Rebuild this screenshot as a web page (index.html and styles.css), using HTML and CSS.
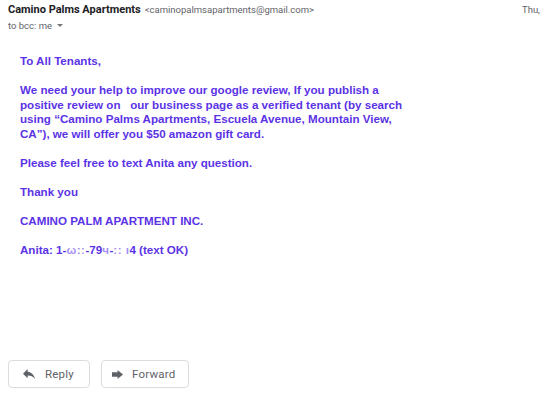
FILE: index.html
```html
<!DOCTYPE html>
<html>
<head>
<meta charset="utf-8">
<link rel="stylesheet" href="styles.css">
</head>
<body>
<div class="mail">
  <div class="header">
    <div class="from-row">
      <span class="sender">Camino Palms Apartments</span>
      <span class="addr">&lt;caminopalmsapartments@gmail.com&gt;</span>
      <span class="date">Thu,</span>
    </div>
    <div class="to-row">to bcc: me <span class="caret"></span></div>
  </div>
  <div class="body">
    <p>To All Tenants,</p>
    <p>We need your help to improve our google review, If you publish a<br>positive review on &nbsp; our business page as a verified tenant (by search<br>using “Camino Palms Apartments, Escuela Avenue, Mountain View,<br>CA”), we will offer you $50 amazon gift card.</p>
    <p>Please feel free to text Anita any question.</p>
    <p>Thank you</p>
    <p>CAMINO PALM APARTMENT INC.</p>
    <p>Anita: 1-<span class="blur">ω:ː</span>-79<span class="blur">ч</span>-<span class="blur">:: ı</span>4 (text OK)</p>
  </div>
  <div class="actions">
    <button class="btn btn-reply">
      <svg class="ico" viewBox="3 5 18 15"><path d="M10 9V5l-7 7 7 7v-4.1c5 0 8.5 1.6 11 5.1-1-5-4-10-11-11z"/></svg>
      <span>Reply</span>
    </button>
    <button class="btn btn-forward">
      <svg class="ico" viewBox="0 0 11 9"><path d="M0 2.2h5.6V0L11 4.5 5.6 9V6.8H0z"/></svg>
      <span>Forward</span>
    </button>
  </div>
</div>
</body>
</html>
```
FILE: styles.css
```css
html, body {
  margin: 0;
  padding: 0;
  background: #ffffff;
}
.mail {
  width: 542px;
  height: 400px;
  font-family: Roboto, "Liberation Sans", Arial, sans-serif;
  color: #202124;
  overflow: hidden;
}
.header {
  padding: 3px 0 0 8px;
}
.from-row {
  display: flex;
  align-items: baseline;
  height: 15px;
  white-space: nowrap;
}
.sender {
  font-weight: 700;
  font-size: 11px;
  color: #202124;
}
.addr {
  margin-left: 4px;
  font-size: 9.5px;
  color: #5f6368;
}
.date {
  margin-left: auto;
  padding-right: 2px;
  font-size: 9.5px;
  color: #5f6368;
}
.to-row {
  display: flex;
  align-items: center;
  font-size: 9.5px;
  color: #5f6368;
  height: 15px;
}
.caret {
  display: inline-block;
  margin-left: 5px;
  width: 0;
  height: 0;
  border-left: 3px solid transparent;
  border-right: 3px solid transparent;
  border-top: 3px solid #777;
}
.body {
  padding: 21px 0 0 20px;
  font-family: "Liberation Sans", Arial, sans-serif;
  font-weight: 700;
  font-size: 11.6px;
  line-height: 14.5px;
  color: #5b33e6;
}
.body p {
  margin: 0 0 14.5px 0;
  white-space: nowrap;
}
.blur {
  opacity: 0.55;
  letter-spacing: 0.5px;
}
.actions {
  display: flex;
  gap: 11px;
  padding: 0 0 0 8px;
  margin-top: 103px;
}
.btn {
  display: flex;
  align-items: center;
  box-sizing: border-box;
  height: 28px;
  margin: 0;
  border: 1px solid #dadce0;
  border-radius: 4px;
  background: #fff;
  font-family: Roboto, "Liberation Sans", Arial, sans-serif;
  font-size: 11.5px;
  color: #5f6368;
  letter-spacing: 0.2px;
}
.btn-reply {
  width: 82px;
  padding: 0 0 0 14px;
  gap: 10px;
}
.btn-forward {
  width: 88px;
  padding: 0 0 0 10px;
  gap: 9px;
}
.btn-reply .ico {
  width: 12px;
  height: 10px;
}
.btn-forward .ico {
  width: 11px;
  height: 9px;
}
.ico {
  fill: #5f6368;
  flex: none;
}
```
